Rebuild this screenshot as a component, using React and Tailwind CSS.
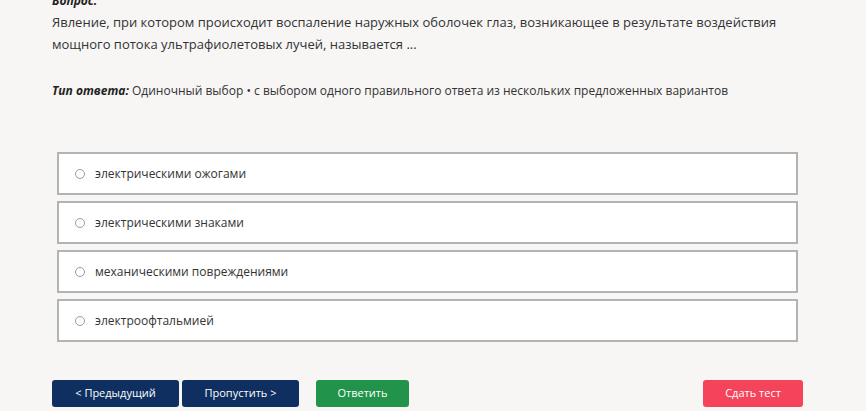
const options = [
  'электрическими ожогами',
  'электрическими знаками',
  'механическими повреждениями',
  'электроофтальмией',
]

export default function App() {
  return (
    <div
      className="h-[411px] w-[866px] overflow-hidden bg-[#f7f6f5] text-[#333333]"
      style={{ fontFamily: '"Open Sans", "Noto Sans", sans-serif' }}
    >
      <div className="mt-[-9px] pl-[52px] pr-[60px]">
        <p className="text-[12px] font-bold italic leading-[20px] text-[#222]">Вопрос:</p>
        <p className="text-[13px] leading-[22px]">
          Явление, при котором происходит воспаление наружных оболочек глаз, возникающее в результате воздействия
          мощного потока ультрафиолетовых лучей, называется ...
        </p>
        <p className="mt-[26px] text-[12px] leading-[20px]">
          <span className="font-bold italic text-[#222]">Тип ответа:</span> Одиночный выбор • с выбором одного
          правильного ответа из нескольких предложенных вариантов
        </p>
      </div>

      <div className="ml-[57px] mt-[51px] flex w-[741px] flex-col gap-[6px]">
        {options.map((o) => (
          <label
            key={o}
            className="flex h-[43px] items-center gap-[10px] border-2 border-[#b3b3b3] bg-white pl-[16px] text-[12px] text-[#333]"
          >
            <span className="h-[10px] w-[10px] rounded-full border border-[#9a9a9a] bg-white" />
            {o}
          </label>
        ))}
      </div>

      <div className="mt-[38px] flex items-center pl-[52px] pr-[63px] text-[11px] text-white">
        <button className="h-[27px] w-[127px] rounded-[3px] bg-[#0e2f5f]">&lt; Предыдущий</button>
        <button className="ml-[3px] h-[27px] w-[117px] rounded-[3px] bg-[#0e2f5f]">Пропустить &gt;</button>
        <button className="ml-[17px] h-[27px] w-[93px] rounded-[3px] bg-[#21934a]">Ответить</button>
        <button className="ml-auto h-[27px] w-[100px] rounded-[3px] bg-[#f4435a]">Сдать тест</button>
      </div>
    </div>
  )
}
